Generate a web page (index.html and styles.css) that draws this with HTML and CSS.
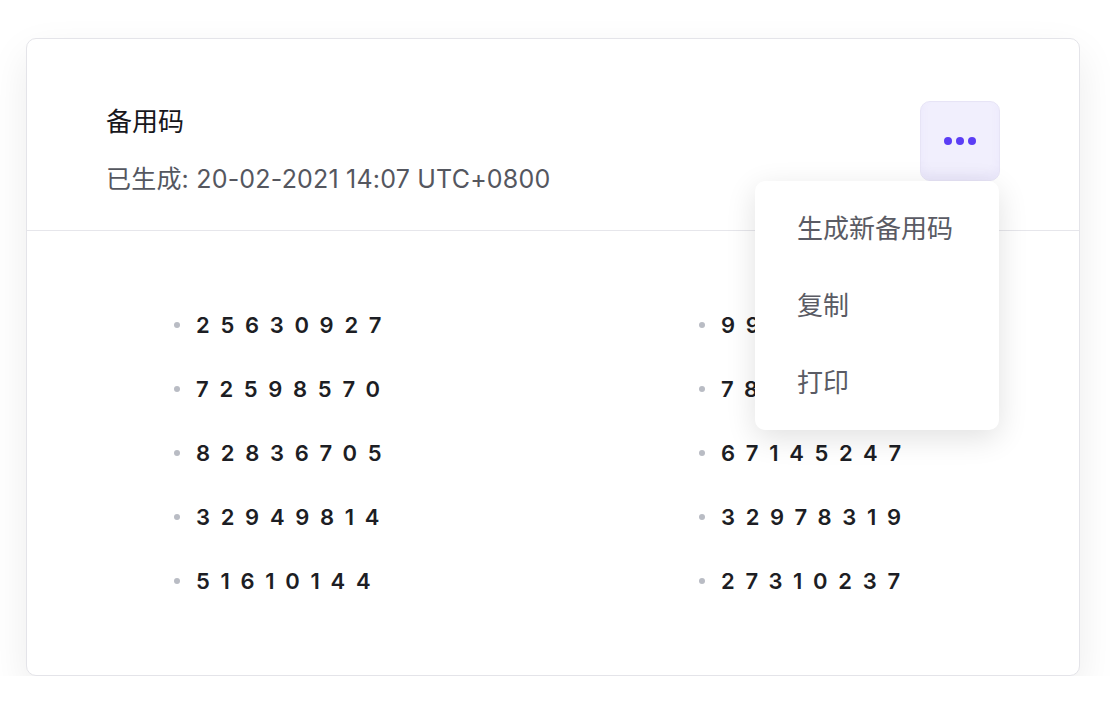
FILE: index.html
```html
<!DOCTYPE html>
<html>
<head>
<link rel="stylesheet" href="styles.css">
</head>
<body>

<div class="card">
  <div class="card-header">
    <div class="info">
      <h2 class="title">备用码</h2>
      <p class="meta">已生成: 20-02-2021 14:07 UTC+0800</p>
    </div>
    <div class="actions">
      <button type="button" class="more-btn" aria-label="更多">
        <svg width="32" height="10" viewBox="0 0 32 10">
          <circle cx="4" cy="5" r="4" fill="#5b3df5"/>
          <circle cx="16" cy="5" r="4" fill="#5b3df5"/>
          <circle cx="28" cy="5" r="4" fill="#5b3df5"/>
        </svg>
      </button>
      <ul class="menu">
        <li>生成新备用码</li>
        <li>复制</li>
        <li>打印</li>
      </ul>
    </div>
  </div>

  <ul class="codes">
    <li>25630927</li>
    <li>99</li>
    <li>72598570</li>
    <li>78</li>
    <li>82836705</li>
    <li>67145247</li>
    <li>32949814</li>
    <li>32978319</li>
    <li>51610144</li>
    <li>27310237</li>
  </ul>
</div>

</body>
</html>
```

FILE: styles.css
```css
body {
  margin: 0;
  background-color: #fff;
  font-family: Inter, "Noto Sans CJK SC", sans-serif;
}

.card {
  margin: 38px 30px 0 26px;
  height: 638px;
  box-sizing: border-box;
  background-color: #fff;
  border: 1px solid #e4e4e9;
  border-radius: 10px;
  box-shadow: 0 16px 40px rgba(0, 0, 0, 0.08);
}

.card-header {
  display: flex;
  justify-content: space-between;
  align-items: flex-start;
  padding: 62px 79px 33px 79px;
  border-bottom: 1px solid #e6e6eb;
}

.info {
  padding-top: 3px;
}

.title {
  margin: 0;
  font-size: 26px;
  line-height: 36px;
  font-weight: 400;
  color: #17171c;
}

.meta {
  margin: 21px 0 0;
  font-size: 25px;
  line-height: 36px;
  letter-spacing: 0.2px;
  color: #55575f;
}

.actions {
  position: relative;
}

.more-btn {
  display: flex;
  align-items: center;
  justify-content: center;
  width: 80px;
  height: 80px;
  padding: 0;
  background-color: #f1effd;
  border: 1px solid #e7e4f6;
  border-radius: 10px;
  box-shadow: inset 0 -6px 10px rgba(120, 100, 220, 0.05);
  cursor: pointer;
}

.menu {
  position: absolute;
  top: 80px;
  right: 1px;
  width: 244px;
  margin: 0;
  padding: 9px 0;
  list-style: none;
  background-color: #fff;
  border-radius: 10px;
  box-shadow: 0 8px 30px rgba(0, 0, 0, 0.12);
  z-index: 2;
}

.menu li {
  padding: 0 42px;
  font-size: 26px;
  line-height: 77px;
  color: #5a5b64;
  white-space: nowrap;
}

.codes {
  display: grid;
  grid-template-columns: 525px 1fr;
  margin: 0;
  padding: 62px 0 60px 147px;
  list-style: none;
}

.codes li {
  display: flex;
  align-items: center;
  gap: 16px;
  height: 64px;
  font-size: 22px;
  font-weight: 600;
  letter-spacing: 10.7px;
  color: #1d1e24;
}

.codes li::before {
  content: "";
  width: 6px;
  height: 6px;
  border-radius: 50%;
  background-color: #b9bcc4;
}
```
